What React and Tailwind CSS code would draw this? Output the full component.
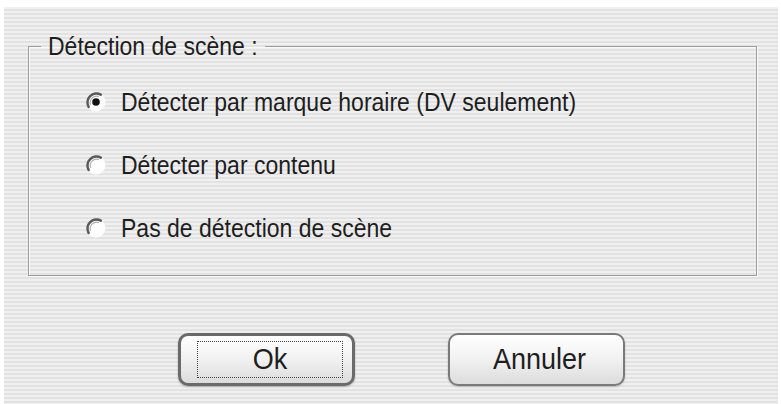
const font = { fontFamily: '"Liberation Sans", Arial, sans-serif' }

const Radio = ({ checked }) => (
  <svg width="22" height="22" viewBox="0 0 22 22" aria-hidden="true">
    <circle cx="11" cy="11" r="9.5" fill="#fdfdfd" />
    <path d="M3.6 15.8 A9 9 0 0 1 15.8 3.6" fill="none" stroke="#5a5a5a" strokeWidth="2.6" strokeLinecap="round" />
    <path d="M5.6 13.8 A6.4 6.4 0 0 1 13.8 5.6" fill="none" stroke="#b0b0b0" strokeWidth="1.2" />
    {checked && <circle cx="11" cy="11" r="3.8" fill="#111" />}
  </svg>
)

const options = [
  { label: "Détecter par marque horaire (DV seulement)", checked: true },
  { label: "Détecter par contenu", checked: false },
  { label: "Pas de détection de scène", checked: false },
]

export default function App() {
  return (
    <div className="w-[781px] h-[404px] bg-white pt-[7px] pl-[4px] pr-[3px] text-[#1e1e1e]" style={font}>
      <div className="h-[397px] bg-[image:repeating-linear-gradient(to_bottom,#f0f0f0_0px,#f0f0f0_2px,#e2e2e2_2px,#e2e2e2_4px)] pt-[26px] pl-[24px]">
        <div className="flex">
          <fieldset className="w-[729px] h-[243px] border border-[#9c9c9c] shadow-[1px_1px_0_#fafafa,inset_1px_1px_0_#fafafa]">
            <legend className="ml-[12px] px-[7px] text-[23px] leading-[26px]">
              <span className="inline-block scale-y-[1.12]">Détection de scène :</span>
            </legend>
            <div className="flex flex-col gap-[37px] pl-[56px] pt-[30px]">
              {options.map((o, i) => (
                <div key={i} className="flex items-center h-[26px]">
                  <Radio checked={o.checked} />
                  <span className="ml-[14px] text-[23px] leading-[26px] inline-block scale-y-[1.12]">{o.label}</span>
                </div>
              ))}
            </div>
          </fieldset>
        </div>
        <div className="flex gap-[93px] pl-[150px] mt-[57px]">
          <button className="w-[177px] h-[53px] rounded-[10px] border-[3px] border-[#6a6a6a] bg-gradient-to-b from-white via-[#f1f1f1] to-[#dcdcdc] shadow-[0_1px_2px_rgba(0,0,0,0.25)] flex items-stretch p-[5px]">
            <div className="flex-1 ml-[11px] mr-[4px] border border-dotted border-[#444] flex items-center justify-center text-[27px] leading-none">
              <span className="inline-block scale-y-[1.08]">Ok</span>
            </div>
          </button>
          <button className="w-[177px] h-[53px] rounded-[10px] border-2 border-[#7a7a7a] bg-gradient-to-b from-white via-[#f1f1f1] to-[#dcdcdc] shadow-[0_1px_2px_rgba(0,0,0,0.2)] flex items-center justify-center text-[27px] leading-none">
            <span className="ml-[6px] inline-block scale-y-[1.08]">Annuler</span>
          </button>
        </div>
      </div>
    </div>
  )
}
